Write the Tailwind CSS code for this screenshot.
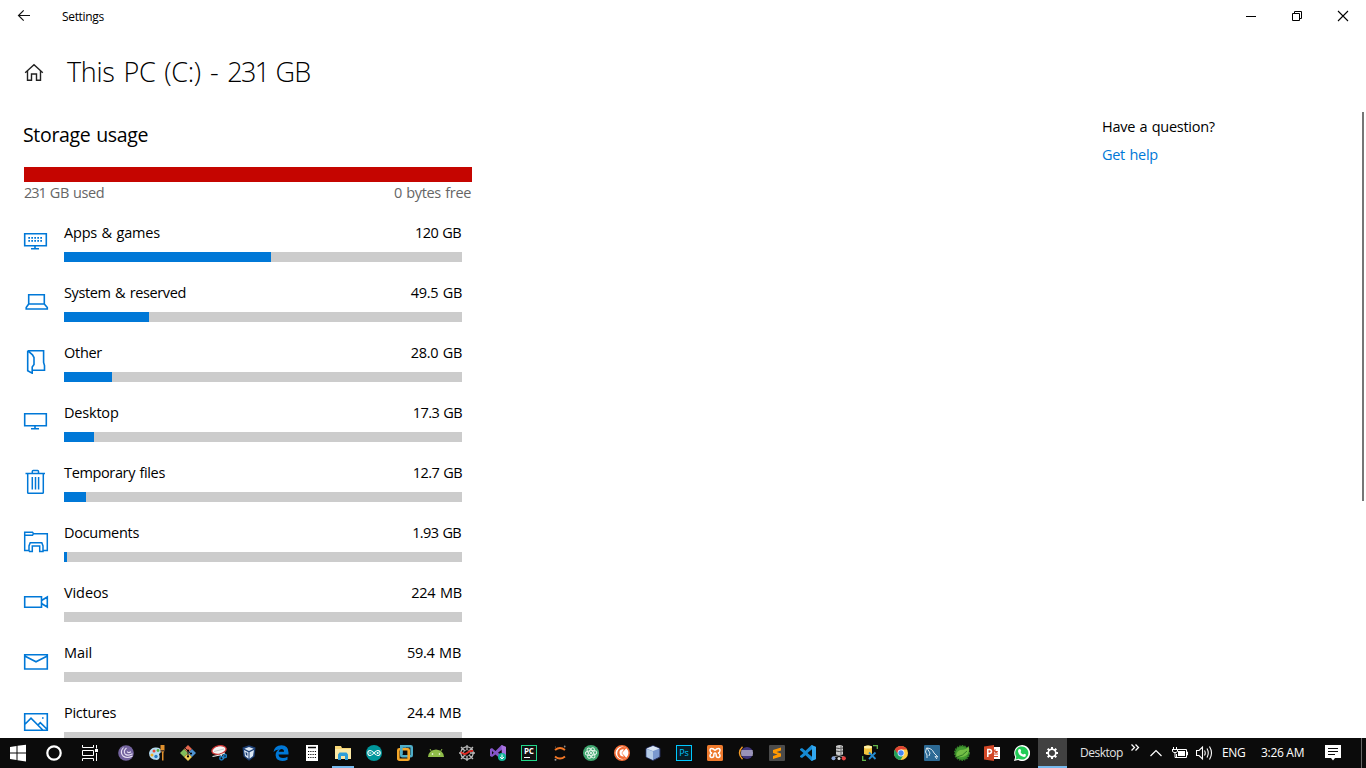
<!DOCTYPE html>
<html lang="en">
<head>
<meta charset="utf-8">
<title>Settings</title>
<script src="https://cdn.jsdelivr.net/npm/@tailwindcss/browser@4"></script>
</head>
<body class="w-[1366px] h-[768px] overflow-hidden bg-white text-black font-['Open_Sans','Noto_Sans',sans-serif]">
<div class="flex flex-col h-[768px]">
  <!-- Title bar -->
  <header class="h-8 shrink-0 flex items-center">
    <svg class="w-12 h-8" viewBox="0 0 48 32" fill="none" stroke="#111" stroke-width="1.2"><path d="M30 15.5H18.5M23.7 10.3L18.5 15.5L23.7 20.7"/></svg>
    <span class="ml-[14px] mt-px text-[12px] leading-4 tracking-[-0.33px] whitespace-nowrap">Settings</span>
    <div class="ml-auto flex">
      <svg class="w-[46px] h-8" viewBox="0 0 46 32" fill="none" stroke="#000"><path d="M18 16.5H28"/></svg>
      <svg class="w-[46px] h-8" viewBox="0 0 46 32" fill="none" stroke="#000"><path d="M18.500 13.500H25.500V20.500H18.500ZM20.500 13.500V11.500H27.500V18.500H25.500"/></svg>
      <svg class="w-[46px] h-8" viewBox="0 0 46 32" fill="none" stroke="#000" stroke-width="1.1"><path d="M18 11L28 21M28 11L18 21"/></svg>
    </div>
  </header>

  <div class="flex-1 min-h-0 flex flex-col overflow-hidden">
    <div class="h-20 shrink-0 flex items-center pl-6">
      <svg class="w-5 h-5" viewBox="0 0 20 20" fill="none" stroke="#222" stroke-width="1.4"><path d="M1.200 10.700L10 2.700L18.800 10.700M3.500 9V18.300H7.500V12H12.500V18.300H16.500V9"/></svg>
      <h1 class="ml-[23px] text-[27px] leading-9 font-light tracking-[-0.35px] [word-spacing:2.400px] whitespace-nowrap">This PC (C:) - <span class="tracking-[-1.700px]">231</span><span class="ml-[7px] tracking-[-0.800px]"><span class="[word-spacing:-7px]"> </span>GB</span></h1>
    </div>
    <div class="flex-1 min-h-0 flex">
      <main class="w-[472px] shrink-0 pl-[23px] pt-[10px]">
        <h2 class="text-[19.5px] leading-[26px] tracking-[-0.32px] [word-spacing:1px] whitespace-nowrap">Storage usage</h2>
        <div class="ml-px mt-[19px] h-[15px] bg-[#c50500]"></div>
        <div class="ml-px pr-px h-10 flex justify-between text-[14.5px] leading-[22px] tracking-[-0.35px] text-[#666]"><span class="[word-spacing:0.500px]"><span class="tracking-[-1px]">231</span> GB used</span><span class="tracking-[-0.35px] [word-spacing:1px]">0 bytes free</span></div>
        <ul class="text-[14.5px] tracking-[-0.28px] [word-spacing:1px]">
          <li class="h-[60px] flex">
            <svg class="w-[26px] h-[26px] mt-[6px] mr-[15px]" viewBox="0 0 26 26" fill="none" stroke="#0078d7" stroke-width="1.6"><path d="M1.700 5.700H23.300V17.700H1.700ZM12 17.700V20.800M8 20.800H16"/><path d="M5.300 9.900H19.500M5.300 12.900H19.500" stroke-width="1.700" stroke-dasharray="1.700 1.300"/></svg>
            <div class="w-[398px]"><div class="flex justify-between leading-[22px] h-[30px]"><span class="tracking-[-0.2px]">Apps &amp; games</span><span class="pr-px tracking-[-0.6px]">120 GB</span></div><div class="h-[10px] bg-[#ccc]"><div class="h-full bg-[#0078d7]" style="width:207px"></div></div></div>
          </li>
          <li class="h-[60px] flex">
            <svg class="w-[26px] h-[26px] mt-[6px] mr-[15px]" viewBox="0 0 26 26" fill="none" stroke="#0078d7" stroke-width="1.6"><path d="M5.700 16V6.700H21.300V16ZM5.700 16L3.200 19.500V21H24.300V19.500L21.300 16"/></svg>
            <div class="w-[398px]"><div class="flex justify-between leading-[22px] h-[30px]"><span class="tracking-[-0.37px]">System &amp; reserved</span><span class="tracking-[-0.3px]">49.5 GB</span></div><div class="h-[10px] bg-[#ccc]"><div class="h-full bg-[#0078d7]" style="width:85px"></div></div></div>
          </li>
          <li class="h-[60px] flex">
            <svg class="w-[26px] h-[26px] mt-[6px] mr-[15px]" viewBox="0 0 26 26" fill="none" stroke="#0078d7" stroke-width="1.6"><path d="M4.700 2.700H20.600V14.500L21.500 17.500V22.300H10M4.700 2.700V22.800L9.200 25.200V19L11 16.500V9.500L9.500 6.800L4.700 2.700"/></svg>
            <div class="w-[398px]"><div class="flex justify-between leading-[22px] h-[30px]"><span>Other</span><span class="tracking-[-0.3px]">28.0 GB</span></div><div class="h-[10px] bg-[#ccc]"><div class="h-full bg-[#0078d7]" style="width:48px"></div></div></div>
          </li>
          <li class="h-[60px] flex">
            <svg class="w-[26px] h-[26px] mt-[6px] mr-[15px]" viewBox="0 0 26 26" fill="none" stroke="#0078d7" stroke-width="1.6"><path d="M1.700 5.700H23.300V17.700H1.700ZM12 17.700V20.800M8 20.800H16"/></svg>
            <div class="w-[398px]"><div class="flex justify-between leading-[22px] h-[30px]"><span class="tracking-[-0.2px]">Desktop</span><span class="tracking-[-0.6px]">17.3 GB</span></div><div class="h-[10px] bg-[#ccc]"><div class="h-full bg-[#0078d7]" style="width:30px"></div></div></div>
          </li>
          <li class="h-[60px] flex">
            <svg class="w-[26px] h-[26px] mt-[6px] mr-[15px]" viewBox="0 0 26 26" fill="none" stroke="#0078d7" stroke-width="1.5"><path d="M2.500 5.500H22M9.300 5.500V3.500Q9.300 2.600 10.200 2.600H14.600Q15.500 2.600 15.500 3.500V5.500M4.700 5.500V24.500Q4.700 25.300 5.500 25.300H19.500Q20.300 25.300 20.300 24.500V5.500M9.300 9V21.500M12.500 9V21.500M15.600 9V21.500"/></svg>
            <div class="w-[398px]"><div class="flex justify-between leading-[22px] h-[30px]"><span class="tracking-[-0.36px]">Temporary files</span><span class="tracking-[-0.6px]">12.7 GB</span></div><div class="h-[10px] bg-[#ccc]"><div class="h-full bg-[#0078d7]" style="width:22px"></div></div></div>
          </li>
          <li class="h-[60px] flex">
            <svg class="w-[26px] h-[26px] mt-[6px] mr-[15px]" viewBox="0 0 26 26" fill="none" stroke="#0078d7" stroke-width="1.5"><path d="M5.500 22.600H1.700V4.200H9.500L10.500 5.700H24.300V22.600H20.500M1.700 7.300H9.500L10.500 5.700M6 23.600V18L7.200 14.800H18.800L20 18V23.600H16.700V18H9.300V23.600H6"/></svg>
            <div class="w-[398px]"><div class="flex justify-between leading-[22px] h-[30px]"><span>Documents</span><span class="pr-px tracking-[-0.65px]">1.93 GB</span></div><div class="h-[10px] bg-[#ccc]"><div class="h-full bg-[#0078d7]" style="width:3px"></div></div></div>
          </li>
          <li class="h-[60px] flex">
            <svg class="w-[26px] h-[26px] mt-[6px] mr-[15px]" viewBox="0 0 26 26" fill="none" stroke="#0078d7" stroke-width="1.6"><path d="M1.700 8.700H18.500V19.300H1.700ZM18.500 12.500L24.300 9V19L18.500 15.500"/></svg>
            <div class="w-[398px]"><div class="flex justify-between leading-[22px] h-[30px]"><span class="tracking-[-0.1px]">Videos</span><span class="tracking-[-0.2px]">224 MB</span></div><div class="h-[10px] bg-[#ccc]"></div></div>
          </li>
          <li class="h-[60px] flex">
            <svg class="w-[26px] h-[26px] mt-[6px] mr-[15px]" viewBox="0 0 26 26" fill="none" stroke="#0078d7" stroke-width="1.6"><path d="M1.700 6.700H24.300V21H1.700ZM1.700 8L13 13.800L24.300 8"/></svg>
            <div class="w-[398px]"><div class="flex justify-between leading-[22px] h-[30px]"><span class="tracking-[-0.1px]">Mail</span><span class="pr-px tracking-[-0.25px]">59.4 MB</span></div><div class="h-[10px] bg-[#ccc]"></div></div>
          </li>
          <li class="h-[60px] flex">
            <svg class="w-[26px] h-[26px] mt-[6px] mr-[15px]" viewBox="0 0 26 26" fill="none" stroke="#0078d7" stroke-width="1.6"><path d="M1.700 5.700H24.300V22.300H1.700ZM1.700 16.500L8 10.200L20 22.300M14.500 17.500L17.300 14.600L24.300 21.500"/><path d="M19 10H20.600"/></svg>
            <div class="w-[398px]"><div class="flex justify-between leading-[22px] h-[30px]"><span>Pictures</span><span class="pr-px tracking-[-0.25px]">24.4 MB</span></div><div class="h-[10px] bg-[#ccc]"></div></div>
          </li>
        </ul>
      </main>
      <aside class="ml-[630px] pt-1 text-[14.5px] leading-[22px] tracking-[-0.28px] [word-spacing:1px] whitespace-nowrap">
        <p>Have a question?</p>
        <a class="block mt-[6px] text-[#0078d7]">Get help</a>
      </aside>
      <div class="ml-auto mr-[2px] w-[2px] h-[389px] bg-[#767676]"></div>
    </div>
  </div>

  <!-- Taskbar -->
  <footer class="h-[30px] shrink-0 flex items-center bg-[#0b0b0b] text-white">
    <div class="flex w-[110.5px] shrink-0 items-center">
      <svg class="w-9 h-[30px]" viewBox="0 0 36 30" fill="#fff"><path d="M10 9L16.500 8V14.500H10ZM17.500 7.800L26 6.700V14.500H17.500ZM10 15.500H16.500V22L10 21.100ZM17.500 15.500H26V23.400L17.500 22.200Z"/></svg>
      <svg class="w-9 h-[30px]" viewBox="0 0 36 30" fill="none" stroke="#fff" stroke-width="2.200"><circle cx="18" cy="15" r="6.700"/></svg>
      <svg class="w-9 h-[30px]" viewBox="0 0 36 30" fill="none" stroke="#fff"><path d="M10.500 7V9.500H21.500V7M10.500 23V20.500H21.500V23M10.500 12.500H21.500V17.500H10.500ZM24.500 7V10.500M24.500 15V23"/><path d="M23 11H26V14H23Z" fill="#fff" stroke="none"/></svg>
    </div>
    <div class="flex shrink-0 h-[30px]">
      <div class="w-[31px] flex items-center justify-center"><svg class="w-4 h-4" viewBox="0 0 16 16"><circle cx="8" cy="8" r="7.800" fill="#74649f"/><path d="M14.500 11Q9 14 5 11Q1.500 7 5.500 2.500M14.500 8.800Q9.500 11.500 7 8.800Q5 6 8.500 3M13 6.800Q10 8.500 9.200 6.500" fill="none" stroke="#e9e2f5" stroke-width="1.100"/></svg></div>
      <div class="w-[31px] flex items-center justify-center"><svg class="w-4 h-4" viewBox="0 0 16 16"><path d="M0 8Q1 3 6 2.500Q12 2 12 6Q12 8 10 9Q12 14 8 15Q0 15 0 8" fill="#b5dcf2"/><circle cx="5" cy="6" r="1.500" fill="#e64a35"/><circle cx="9" cy="5.500" r="1.400" fill="#58b047"/><circle cx="3" cy="10" r="1.500" fill="#f0ad24"/><circle cx="7" cy="11.500" r="1.700" fill="#277bc4"/><path d="M11.500 0H15.500V5L14.500 8V15.500H13V8L11.500 5Z" fill="#e0902d"/><path d="M11.500 5H15.500V6.500H11.500Z" fill="#553b28"/></svg></div>
      <div class="w-[31px] flex items-center justify-center"><svg class="w-4 h-4" viewBox="0 0 16 16"><path d="M8 0L12 4L8 8L4 4Z" fill="#e6674e"/><path d="M4 4L8 8L4 12L0 8Z" fill="#83bd5b"/><path d="M12 4L16 8L12 12L8 8Z" fill="#4c92d2"/><path d="M8 8L12 12L8 16L4 12Z" fill="#f0cd56"/><path d="M5 3L11 9M8 5V12" stroke="#222" stroke-width="1"/><circle cx="8" cy="5.500" r="1.100"/><circle cx="11" cy="8.500" r="1.100"/><circle cx="8" cy="11.500" r="1.100"/></svg></div>
      <div class="w-[31px] flex items-center justify-center"><svg class="w-4 h-4" viewBox="0 0 16 16"><ellipse cx="8" cy="5" rx="7.200" ry="4.200" transform="rotate(-12 8 5)" fill="#f5f5f5" stroke="#cf3535" stroke-width="1.300"/><path d="M3 6.500L13 4" stroke="#ccc"/><path d="M1.500 11.500L9 10L14 8M10 10L13 14" fill="none" stroke="#eee" stroke-width="1.200"/><g fill="none" stroke="#1979be" stroke-width="1.500"><circle cx="10.500" cy="13.300" r="1.700"/><circle cx="14" cy="11" r="1.500"/></g></svg></div>
      <div class="w-[31px] flex items-center justify-center pr-[2px]"><svg class="w-4 h-4" viewBox="0 0 16 16"><path d="M8 .3L14.500 2.500L13.500 11.500L8 15.700L2.500 11.500L1.500 2.500Z" fill="#1d3f74"/><path d="M8 2L12.700 3.700L8 6L3.300 3.700ZM3 5L7.500 7.300V13.800L4 11ZM13 5L8.500 7.300V13.800L12 11Z" fill="#dce8f5"/><path d="M4.500 7L6.300 8V11L4.900 10Z" fill="#1d3f74"/></svg></div>
      <div class="w-[31px] flex items-center justify-center"><svg class="w-4 h-4" viewBox="0 0 16 16"><path d="M.5 7Q1.500 .4 8.500 .3Q15.500 .5 15.500 7.500V9.500H5.500Q5.800 13 10 13Q12.500 13 14.500 11.800V14.800Q12 16 9.300 16Q3 15.800 2.600 10.300Q2.500 6.500 6 4.500Q2.500 4.700 .5 7M5.700 6.800H11Q11 4 8.500 4Q6.300 4 5.700 6.800" fill="#0078d7" fill-rule="evenodd"/></svg></div>
      <div class="w-[31px] flex items-center justify-center"><svg class="w-4 h-4" viewBox="0 0 16 16"><path d="M2 0H14V16H2Z" fill="#fff"/><path d="M4 2.500H12" stroke="#0b0b0b" stroke-width="1.500"/><path d="M4 6.500H12.500M4 9.500H12.500M4 12.500H12.500" stroke="#0b0b0b" stroke-width="1.200" stroke-dasharray="1.200 1.070"/></svg></div>
      <div class="w-[31px] flex items-center justify-center relative"><svg class="w-4 h-4" viewBox="0 0 16 16"><path d="M0 1H6L7 3H16V14H0Z" fill="#f8d778"/><path d="M0 4H16V14H0Z" fill="#fce9a5"/><path d="M3 15V9.500L4.500 7.500H11.500L13 9.500V15H10V11H6V15Z" fill="#2e9fd9"/></svg><span class="absolute bottom-0 left-[4.5px] w-[22px] h-[2px] bg-[#76b9ed]"></span></div>
      <div class="w-[31px] flex items-center justify-center"><svg class="w-4 h-4" viewBox="0 0 16 16"><circle cx="8" cy="8" r="8" fill="#00979c"/><path d="M8 8Q5.800 5.500 4.300 5.500A2.500 2.500 0 0 0 4.300 10.500Q5.800 10.500 8 8Q10.200 5.500 11.700 5.500A2.500 2.500 0 0 1 11.700 10.500Q10.200 10.500 8 8M3.300 8H5.300M10.700 8H12.700M11.700 7V9" fill="none" stroke="#fff" stroke-width="1.100"/></svg></div>
      <div class="w-[31px] flex items-center justify-center"><svg class="w-4 h-4" viewBox="0 0 16 16" fill="none" stroke-width="2.600"><rect x="4.300" y="1.300" width="10.400" height="10" rx="1" stroke="#4faec9"/><rect x="1.300" y="4.300" width="10.400" height="10.400" rx="1" stroke="#f5a72a"/><path d="M4.300 9V1.300H9" stroke="#4faec9"/></svg></div>
      <div class="w-[31px] flex items-center justify-center"><svg class="w-4 h-4" viewBox="0 0 16 16"><path d="M0 12Q.5 5 8 4.500Q15.500 5 16 12Z" fill="#8fbc49"/><path d="M3.500 6.500L2 4M12.500 6.500L14 4" stroke="#8fbc49"/><circle cx="4.500" cy="9" r=".8" fill="#fff"/><circle cx="11.500" cy="9" r=".8" fill="#fff"/></svg></div>
      <div class="w-[31px] flex items-center justify-center"><svg class="w-4 h-4" viewBox="0 0 16 16" fill="none"><path d="M8 1.500L12.800 3.500L14.500 8L12.800 12.500L8 14.500L3.200 12.500L1.500 8L3.200 3.500ZM8 5V0M8 11V16M5 8H0M11 8H16M6 6L2 2M10 10L14 14M10 6L14 2M6 10L2 14" stroke="#b9b9b9" stroke-width="1.300"/><path d="M8 4.500L11 6L11.500 9L8 11.500L5 10L4.500 6.500Z" stroke="#999" stroke-width=".8"/><path d="M2 7Q5 10.500 8 8T14 6" stroke="#e02a22" stroke-width="1.900"/></svg></div>
      <div class="w-[31px] flex items-center justify-center"><svg class="w-4 h-4" viewBox="0 0 16 16"><path d="M11.500 0L16 2V13L11.500 15L5.500 9.500L2 12L0 11V4L2 3L5.500 6ZM12 4.500L8 7.700L12 10.500ZM2 6V9.500L3.800 7.700Z" fill="#8455c7" fill-rule="evenodd"/><path d="M11.500 0L16 2V13L12 15Z" fill="#a873df"/><circle cx="12" cy="12" r="4" fill="#12b69b"/><path d="M12 9.500V14M10 12L12 14L14 12" stroke="#fff" fill="none"/></svg></div>
      <div class="w-[31px] flex items-center justify-center"><div class="w-4 h-4 bg-[#111] border border-[#21d789] font-bold text-[8px] leading-[9px] tracking-[-0.2px] pl-[2px]">PC<div class="w-[6px] h-px bg-white mt-[2px]"></div></div></div>
      <div class="w-[31px] flex items-center justify-center"><svg class="w-4 h-4" viewBox="0 0 16 16" fill="none"><path d="M3 5Q8 .8 13 5M3 11.500Q8 15.700 13 11.500" stroke="#f37726" stroke-width="1.900"/><circle cx="12.700" cy="1.500" r=".9" fill="#888"/><circle cx="3.500" cy="14.700" r="1" fill="#999"/><circle cx="3.500" cy="2" r=".6" fill="#777"/></svg></div>
      <div class="w-[31px] flex items-center justify-center"><svg class="w-4 h-4" viewBox="0 0 16 16" fill="none"><circle cx="8" cy="8" r="8" fill="#3fa66f"/><g stroke="#e1f3e8" stroke-width="1"><ellipse cx="8" cy="8" rx="2.300" ry="5.700" transform="rotate(25 8 8)"/><ellipse cx="8" cy="8" rx="2.300" ry="5.700" transform="rotate(85 8 8)"/><ellipse cx="8" cy="8" rx="2.300" ry="5.700" transform="rotate(145 8 8)"/></g><circle cx="8" cy="8" r="1" fill="#fff"/></svg></div>
      <div class="w-[31px] flex items-center justify-center"><svg class="w-4 h-4" viewBox="0 0 16 16"><circle cx="8" cy="8" r="7.200" fill="#fff" stroke="#f36c35" stroke-width="1.600"/><path d="M12.500 3L8 8L12.500 13Q9 15 5.500 13Q2.500 10.500 3.500 6.500Q4.500 3 8 2Q10.500 1.700 12.500 3" fill="#f36c35"/><path d="M5.500 8Q5 5 8.500 4.200L10 4.500L7.500 8L10 11.500Q6 12 5.500 8" fill="#fff"/></svg></div>
      <div class="w-[31px] flex items-center justify-center"><svg class="w-4 h-4" viewBox="0 0 16 16"><path d="M8 .5L15 3.500V12L8 15.500L1 12V3.500Z" fill="#7a98cf" stroke="#252c57"/><path d="M8 1L14.500 3.500L8 6L1.500 3.500Z" fill="#d9e5f3"/><path d="M1.500 4L8 6.500V15L1.500 12Z" fill="#b5cce7"/></svg></div>
      <div class="w-[31px] flex items-center justify-center"><div class="w-4 h-4 border border-[#00c8ff] bg-[#071e28] text-[#00c8ff] text-[9px] leading-[13px] text-center tracking-[-0.2px]">Ps</div></div>
      <div class="w-[31px] flex items-center justify-center"><svg class="w-4 h-4" viewBox="0 0 16 16"><rect width="16" height="16" rx="1.500" fill="#ee7a2d"/><path d="M8 5.500Q6.500 3.500 4.500 3.500Q3 3.500 3 5.500Q3 7.500 5 8Q3 8.500 3 10.500Q3 12.500 4.800 12.500Q6.800 12.500 6.800 10.500Q6.800 8 8 8Q9.200 8 9.200 10.500Q9.200 12.500 11.200 12.500Q13 12.500 13 10.500Q13 8.500 11 8Q13 7.500 13 5.500Q13 3.500 11.500 3.500Q9.500 3.500 8 5.500" fill="none" stroke="#fff" stroke-width="1.500"/></svg></div>
      <div class="w-[31px] flex items-center justify-center"><svg class="w-4 h-4" viewBox="0 0 16 16"><path d="M4.500 1.800Q-1.500 8 4.500 14.200" fill="none" stroke="#f59c27" stroke-width="1.400"/><circle cx="9" cy="8" r="6" fill="#40367b"/><path d="M3.200 6H14.800M3 8H15M3.200 10H14.800" stroke="#f2f0f7" stroke-width="1.100"/></svg></div>
      <div class="w-[31px] flex items-center justify-center"><svg class="w-4 h-4" viewBox="0 0 16 16"><rect width="16" height="16" rx="1" fill="#4b4b4b"/><path d="M12 2.500V5.500L7.500 7L12 8.500V11.500L4 14V11L8.500 9.500L4 8V5Z" fill="#ff9800"/></svg></div>
      <div class="w-[31px] flex items-center justify-center"><svg class="w-4 h-4" viewBox="0 0 16 16"><path d="M11.500 0L16 2V14L11.500 16L5.500 10.200L2 13L0 12V11L3.500 8L0 5V4L2 3L5.500 5.800ZM12 4.300L7.500 8L12 11.700Z" fill="#168bd4" fill-rule="evenodd"/><path d="M11.500 0L16 2V14L11.500 16L12 11.700V4.300Z" fill="#32a7ef"/></svg></div>
      <div class="w-[31px] flex items-center justify-center"><svg class="w-4 h-4" viewBox="0 0 16 16"><path d="M5 1Q8.500 -.8 12 1V9.500Q8.500 11 5 9.500Z" fill="#c9c9c9"/><path d="M5 3Q8.500 4 12 3M5 6Q8.500 7 12 6" stroke="#444" fill="none"/><path d="M10 1V10" stroke="#777" stroke-width="1.200"/><path d="M2.500 12L8 10.500L13 12" stroke="#999" fill="none"/><circle cx="2.500" cy="13.300" r="2" fill="#8ba6d7"/><circle cx="8" cy="13.500" r="1.500" fill="#ddd"/><circle cx="12.800" cy="13.300" r="2.100" fill="#e64140"/></svg></div>
      <div class="w-[31px] flex items-center justify-center"><svg class="w-4 h-4" viewBox="0 0 16 16"><path d="M2 1.500Q6 -.3 10 1.500V9Q6 11 2 9Z" fill="#f3c33c"/><ellipse cx="6" cy="1.900" rx="4" ry="1.500" fill="#fff0a5"/><path d="M11 .7H15.300V4M.7 11V15.300H4" fill="none" stroke="#63b54b" stroke-width="1.300"/><path d="M7 7.500L13.500 14M13.500 7.500L7 14" stroke="#248ad0" stroke-width="1.800"/></svg></div>
      <div class="w-[31px] flex items-center justify-center"><svg class="w-4 h-4" viewBox="0 0 16 16"><circle cx="8" cy="8" r="7" fill="#ffcd42"/><path d="M8 8L1.940 4.500A7 7 0 0 0 7.500 15L10.500 10Z" fill="#20a15e"/><path d="M14.060 4.500H8L4 8L1.940 4.500A7 7 0 0 1 14.060 4.500" fill="#e04334"/><circle cx="8" cy="8" r="3.400" fill="#fff"/><circle cx="8" cy="8" r="2.700" fill="#4687f4"/></svg></div>
      <div class="w-[30.5px] flex items-center justify-center"><svg class="w-4 h-4" viewBox="0 0 16 16"><rect width="16" height="16" rx="1" fill="#2c6a95"/><path d="M3 13V10L1.500 7L2.500 3Q8 3 10 8L14 12L11 11.500L13 14M3 3L6 8L5 11" fill="none" stroke="#d8e7f0" stroke-width="1"/></svg></div>
      <div class="w-[30px] flex items-center justify-center"><svg class="w-4 h-4" viewBox="0 0 16 16"><circle cx="8" cy="8" r="7" fill="#439b30" stroke="#348029" stroke-width="2" stroke-dasharray="1.500 1"/><path d="M14.500 1Q13 5 6 5Q1.500 7 2.500 12Q12 13 14.500 8Q16 4 14.500 1" fill="#72bd45"/><path d="M3 12Q9 11 13 6" stroke="#337b27" fill="none"/></svg></div>
      <div class="w-[30px] flex items-center justify-center"><svg class="w-4 h-4" viewBox="0 0 16 16"><path d="M9 2H16V14H9Z" fill="#fff"/><path d="M10 9H14M10 11.500H14" stroke="#d24726"/><path d="M11.500 4A2 2 0 1 0 14 6H11.500Z" fill="#d24726"/><path d="M0 1.500L10 0V16L0 14.500Z" fill="#d24726"/><path d="M3.800 12V4.500H5.500Q7.500 4.700 7.500 6.500Q7.500 8.700 3.800 8.700" fill="none" stroke="#fff" stroke-width="1.500"/></svg></div>
      <div class="w-[30px] flex items-center justify-center"><svg class="w-4 h-4" viewBox="0 0 16 16"><path d="M0 16L1.200 12A8 8 0 1 1 4.200 15Z" fill="#fff"/><path d="M1.500 14.500L2.300 11.700A6.600 6.600 0 1 1 4.600 13.800Z" fill="#22cc56"/><path d="M5 4L6.500 4.200L7.200 6L6.500 7Q7.500 9 9.200 9.500L10.200 8.700L12 9.500Q12 12 10 12Q5 11 4 6.500Q4 4.500 5 4" fill="#fff"/></svg></div>
      <div class="ml-px w-[29px] flex items-center justify-center bg-[#414141] relative"><svg class="w-4 h-4 -translate-x-px" viewBox="0 0 16 16" fill="none" stroke="#fff"><circle cx="8" cy="8" r="3.700" stroke-width="1.800"/><path d="M8 4.500V2M8 11.500V14M4.500 8H2M11.500 8H14M5.500 5.500L3.700 3.700M10.500 5.500L12.300 3.700M5.500 10.500L3.700 12.300M10.500 10.500L12.300 12.300" stroke-width="2"/><circle cx="8" cy="8" r="2.700" fill="#414141" stroke="none"/></svg><span class="absolute bottom-0 inset-x-0 h-[2px] bg-[#76b9ed]"></span></div>
    </div>
    <div class="ml-auto flex items-center shrink-0 h-[30px] text-[12px] leading-4 tracking-[-0.4px] whitespace-nowrap">
      <span class="w-[51px] text-[#e2e2e2] tracking-[-0.5px]">Desktop</span>
      <svg class="w-[19px] h-[30px]" viewBox="0 0 19 30" fill="none" stroke="#fff" stroke-width="1.300"><path d="M.5 6.500L3.500 9.500L.5 12.500M4.500 6.500L7.500 9.500L4.500 12.500"/></svg>
      <svg class="w-[22px] h-[30px]" viewBox="0 0 22 30" fill="none" stroke="#fff" stroke-width="1.200"><path d="M.5 18L6 12.500L11.500 18"/></svg>
      <svg class="w-[24px] h-[30px]" viewBox="0 0 24 30" fill="none" stroke="#fff"><path d="M6 11.500H14.500V19.500H4.500V16M14.500 14H15.500V17H14.500M1.500 9V11M4.500 9V11M0 11.500H6M.5 11.500V13.500L2 14.500H4L5.500 13.500V11.500M3 14.500V19.500H5"/><path d="M6 13H13V18H6Z" fill="#fff" stroke="none"/></svg>
      <svg class="w-[26px] h-[30px]" viewBox="0 0 26 30" fill="none" stroke="#fff" stroke-width="1.100"><path d="M.5 12.500H3L6.500 9V21L3 17.500H.5ZM8.500 12.500Q10 15 8.500 17.500M11 10.500Q13.500 15 11 19.500M13.500 8.500Q17.500 15 13.500 21.500"/></svg>
      <span class="w-[39px]">ENG</span>
      <span class="w-[64px] tracking-[-0.3px]">3:26 AM</span>
      <svg class="w-4 h-[30px]" viewBox="0 0 16 30"><path d="M0 7H16V20H10L8 22.500L6 20H0Z" fill="#fff"/><path d="M3 10.500H13M3 13.500H13M3 16.500H10" stroke="#0b0b0b"/></svg>
      <div class="ml-5 mr-1 w-px h-[30px] bg-[#666]"></div>
    </div>
  </footer>
</div>
</body>
</html>
